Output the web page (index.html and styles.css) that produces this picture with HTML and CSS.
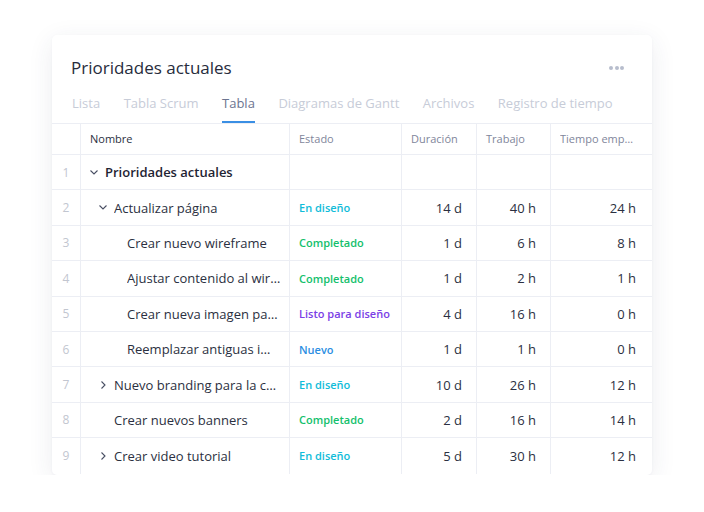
FILE: index.html
```html
<!DOCTYPE html>
<html lang="es">
<head>
<meta charset="utf-8">
<link rel="stylesheet" href="styles.css">
</head>
<body>
<div class="card">
  <div class="head">
    <h1 class="title">Prioridades actuales</h1>
    <div class="more"><span></span><span></span><span></span></div>
  </div>
  <nav class="tabs">
    <span class="tab">Lista</span>
    <span class="tab">Tabla Scrum</span>
    <span class="tab active">Tabla</span>
    <span class="tab">Diagramas de Gantt</span>
    <span class="tab">Archivos</span>
    <span class="tab">Registro de tiempo</span>
  </nav>
  <div class="grid">
    <div class="row hdr">
      <div class="c idx"></div>
      <div class="c name">Nombre</div>
      <div class="c">Estado</div>
      <div class="c">Duración</div>
      <div class="c">Trabajo</div>
      <div class="c last"><span class="clip">Tiempo empleado</span></div>
    </div>
    <div class="row">
      <div class="c idx">1</div>
      <div class="c name l0 bold"><svg class="chev" viewBox="0 0 8 5"><path d="M0.5 0.5 L4 4 L7.5 0.5"/></svg><span class="txt">Prioridades actuales</span></div>
      <div class="c"></div><div class="c"></div><div class="c"></div><div class="c last"></div>
    </div>
    <div class="row">
      <div class="c idx">2</div>
      <div class="c name l1"><svg class="chev" viewBox="0 0 8 5"><path d="M0.5 0.5 L4 4 L7.5 0.5"/></svg><span class="txt">Actualizar página</span></div>
      <div class="c st cyan">En diseño</div>
      <div class="c num">14 d</div><div class="c num">40 h</div><div class="c num last">24 h</div>
    </div>
    <div class="row">
      <div class="c idx">3</div>
      <div class="c name l2"><span class="txt">Crear nuevo wireframe</span></div>
      <div class="c st green">Completado</div>
      <div class="c num">1 d</div><div class="c num">6 h</div><div class="c num last">8 h</div>
    </div>
    <div class="row">
      <div class="c idx">4</div>
      <div class="c name l2"><span class="txt">Ajustar contenido al wireframe</span></div>
      <div class="c st green">Completado</div>
      <div class="c num">1 d</div><div class="c num">2 h</div><div class="c num last">1 h</div>
    </div>
    <div class="row">
      <div class="c idx">5</div>
      <div class="c name l2"><span class="txt">Crear nueva imagen para la portada</span></div>
      <div class="c st purple">Listo para diseño</div>
      <div class="c num">4 d</div><div class="c num">16 h</div><div class="c num last">0 h</div>
    </div>
    <div class="row">
      <div class="c idx">6</div>
      <div class="c name l2"><span class="txt">Reemplazar antiguas imágenes</span></div>
      <div class="c st blue">Nuevo</div>
      <div class="c num">1 d</div><div class="c num">1 h</div><div class="c num last">0 h</div>
    </div>
    <div class="row">
      <div class="c idx">7</div>
      <div class="c name l1"><svg class="chev right" viewBox="0 0 5 8"><path d="M0.5 0.5 L4 4 L0.5 7.5"/></svg><span class="txt">Nuevo branding para la compañía</span></div>
      <div class="c st cyan">En diseño</div>
      <div class="c num">10 d</div><div class="c num">26 h</div><div class="c num last">12 h</div>
    </div>
    <div class="row">
      <div class="c idx">8</div>
      <div class="c name l1 nochev"><span class="txt">Crear nuevos banners</span></div>
      <div class="c st green">Completado</div>
      <div class="c num">2 d</div><div class="c num">16 h</div><div class="c num last">14 h</div>
    </div>
    <div class="row lastrow">
      <div class="c idx">9</div>
      <div class="c name l1"><svg class="chev right" viewBox="0 0 5 8"><path d="M0.5 0.5 L4 4 L0.5 7.5"/></svg><span class="txt">Crear video tutorial</span></div>
      <div class="c st cyan">En diseño</div>
      <div class="c num">5 d</div><div class="c num">30 h</div><div class="c num last">12 h</div>
    </div>
  </div>
</div>
</body>
</html>
```
FILE: styles.css
```css
* { box-sizing: border-box; }
html, body { margin: 0; padding: 0; background: #ffffff; }
body {
  font-family: "Open Sans", "Noto Sans", sans-serif;
  color: #2b3041;
  padding: 35px 0 0 52px;
}
.card {
  width: 600px;
  background: #fff;
  border-radius: 5px;
  box-shadow: 0 6px 26px rgba(40, 50, 90, 0.09), 0 1px 3px rgba(40, 50, 90, 0.04);
  overflow: hidden;
}
.head {
  display: flex;
  align-items: center;
  justify-content: space-between;
  padding: 21px 28px 0 19px;
}
.title {
  margin: 0;
  font-size: 17px;
  font-weight: 400;
  line-height: 24px;
  color: #272c3c;
}
.more { display: flex; gap: 1.5px; }
.more span {
  width: 4px; height: 4px; border-radius: 50%;
  background: #b7bdcd;
}
.tabs {
  display: flex;
  gap: 23.5px;
  padding: 0 20px;
  margin-top: 13px;
}
.tab {
  font-size: 13px;
  line-height: 20px;
  color: #c7ccd8;
  padding-bottom: 8px;
  border-bottom: 2px solid transparent;
}
.tab.active {
  color: #6c7490;
  border-bottom-color: #3a8fe4;
}
.grid { border-top: 1px solid #eceef4; }
.row {
  display: grid;
  grid-template-columns: 29px 209px 112px 75px 74px 101px;
  height: 35.4px;
  border-bottom: 1px solid #eceef4;
}
.row.lastrow { border-bottom: none; height: 37px; padding-bottom: 1.5px; }
.row.hdr { height: 31px; }
.c {
  border-right: 1px solid #eceef4;
  display: flex;
  align-items: center;
  padding: 0 9px;
  font-size: 13px;
  white-space: nowrap;
  overflow: hidden;
  min-width: 0;
}
.c.last { border-right: none; }
.hdr .c {
  font-size: 11px;
  color: #7f869b;
  padding-bottom: 2px;
}
.clip {
  display: block;
  max-width: 75px;
  overflow: hidden;
  text-overflow: ellipsis;
  white-space: nowrap;
}
.c.idx {
  justify-content: center;
  padding: 0;
  font-size: 12px;
  color: #c2c6d0;
}
.c.name { padding-right: 8px; color: #2b3041; }
.c.name .txt { overflow: hidden; text-overflow: ellipsis; white-space: nowrap; }
.c.name.bold { font-weight: 600; color: #1f2433; }
.chev {
  flex: none;
  width: 8px; height: 5px;
  fill: none;
  stroke: #4a5064;
  stroke-width: 1.1;
  margin-right: 7px;
}
.chev.right { width: 5px; height: 8px; margin-right: 8px; margin-left: 2px; }
.l0 { padding-left: 9px; }
.l1 { padding-left: 18px; }
.l1.nochev { padding-left: 33px; }
.l2 { padding-left: 46px; }
.st { font-size: 11px; font-weight: 600; }
.cyan { color: #11bcd9; }
.green { color: #13c06c; }
.purple { color: #7a3ee6; }
.blue { color: #2b8ee2; }
.num { justify-content: flex-end; padding-right: 14px; color: #2b3041; }
.num.last { padding-right: 16px; }
```
